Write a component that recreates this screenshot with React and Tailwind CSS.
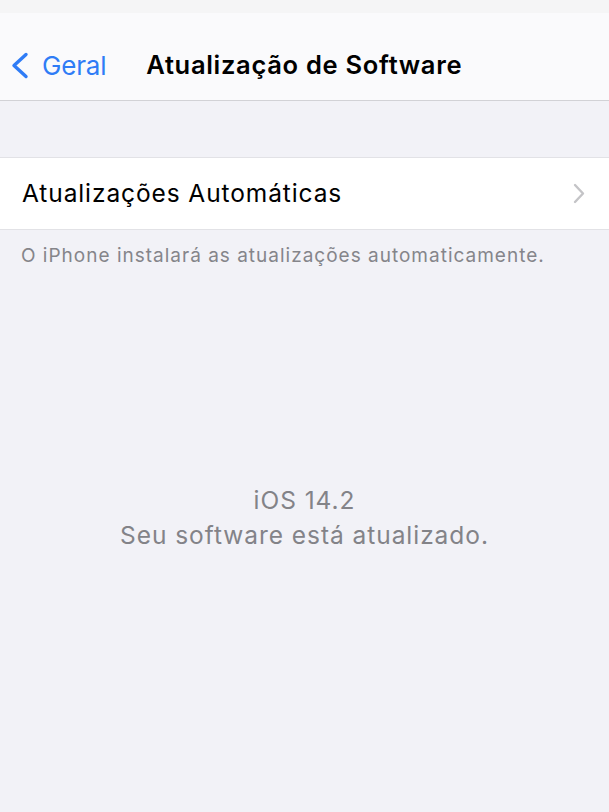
export default function App() {
  return (
    <div
      className="min-h-[812px] bg-[#f2f2f7] flex flex-col"
      style={{ fontFamily: "Inter, 'Liberation Sans', sans-serif" }}
    >
      {/* status strip */}
      <div className="h-[13px] bg-[#f5f5f6]" />

      {/* nav bar */}
      <div className="h-[88px] bg-[#fafafc] border-b border-[#d2d2d6] flex items-center pt-[18px]">
        <div className="flex items-center pl-[10px]">
          <svg width="19" height="27" viewBox="0 0 19 27" fill="none">
            <path
              d="M16 2.5 L4 13.5 L16 24.5"
              stroke="#2f7cf6"
              strokeWidth="3.4"
              strokeLinecap="round"
              strokeLinejoin="round"
            />
          </svg>
          <span className="ml-[13px] text-[26px] text-[#2f7cf6] tracking-[-0.2px]">
            Geral
          </span>
        </div>
        <div className="ml-[40px] text-[25.5px] font-semibold text-black tracking-[0.7px]">
          Atualização de Software
        </div>
      </div>

      <div className="h-[56px]" />

      {/* row */}
      <div className="h-[73px] bg-white border-t border-b border-[#e2e2e6] flex items-center justify-between pl-[22px] pr-[24px]">
        <span className="text-[24.5px] text-black tracking-[0.9px]">
          Atualizações Automáticas
        </span>
        <svg width="12" height="21" viewBox="0 0 12 21" fill="none">
          <path
            d="M2 2 L10 10.5 L2 19"
            stroke="#c4c4c7"
            strokeWidth="2.4"
            strokeLinecap="round"
            strokeLinejoin="round"
          />
        </svg>
      </div>

      <div className="pl-[21px] pt-[12px] text-[19px] text-[#85858a] tracking-[1px]">
        O iPhone instalará as atualizações automaticamente.
      </div>

      <div className="mt-[212px] flex flex-col items-center text-[#838388] text-[24.5px] leading-[35px] tracking-[0.95px]">
        <span>iOS 14.2</span>
        <span>Seu software está atualizado.</span>
      </div>
    </div>
  );
}
